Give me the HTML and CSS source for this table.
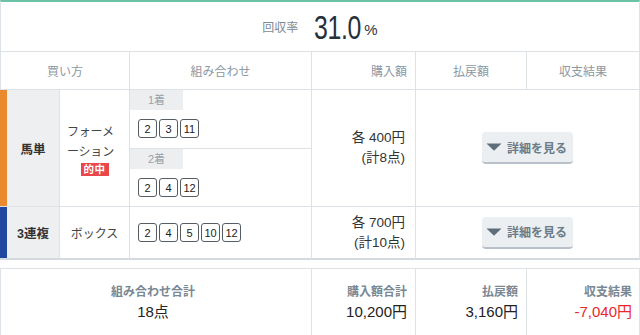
FILE: index.html
```html
<!DOCTYPE html>
<html lang="ja">
<head>
<meta charset="utf-8">
<title>収支</title>
<link rel="stylesheet" href="styles.css">
</head>
<body>
<div class="panel">
  <div class="rate">
    <span class="rate-label">回収率</span>
    <span class="rate-value"><span class="rate-digits">31.0</span></span>
    <span class="rate-unit">%</span>
  </div>

  <div class="bets">
    <div class="th th-first">買い方</div>
    <div class="th">組み合わせ</div>
    <div class="th th-right">購入額</div>
    <div class="th">払戻額</div>
    <div class="th">収支結果</div>

    <div class="cell bar bar-orange row1"></div>
    <div class="cell type row1">馬単</div>
    <div class="cell method method-left row1">
      <div class="method-text">フォーメーション</div>
      <span class="hit">的中</span>
    </div>
    <div class="cell combo row1">
      <div class="leg leg-top">
        <div class="leg-label">1着</div>
        <div class="nums"><span class="num">2</span><span class="num">3</span><span class="num">11</span></div>
      </div>
      <div class="leg leg-bottom">
        <div class="leg-label">2着</div>
        <div class="nums"><span class="num">2</span><span class="num">4</span><span class="num">12</span></div>
      </div>
    </div>
    <div class="cell amount row1">各 400円<br>(計8点)</div>
    <div class="cell detail row1">
      <button class="detail-btn" type="button"><svg class="tri" width="16" height="8" viewBox="0 0 16 8"><path d="M0.5 0.5 H15.5 L8 7.8 Z" fill="#5e6e7b"/></svg>詳細を見る</button>
    </div>

    <div class="cell bar bar-blue row2"></div>
    <div class="cell type row2">3連複</div>
    <div class="cell method row2">ボックス</div>
    <div class="cell combo combo-box row2">
      <div class="nums"><span class="num">2</span><span class="num">4</span><span class="num">5</span><span class="num">10</span><span class="num">12</span></div>
    </div>
    <div class="cell amount row2">各 700円<br>(計10点)</div>
    <div class="cell detail row2">
      <button class="detail-btn" type="button"><svg class="tri" width="16" height="8" viewBox="0 0 16 8"><path d="M0.5 0.5 H15.5 L8 7.8 Z" fill="#5e6e7b"/></svg>詳細を見る</button>
    </div>
  </div>

  <div class="summary">
    <div class="sum sum-first sum-center">
      <div class="sum-label">組み合わせ合計</div>
      <div class="sum-value">18点</div>
    </div>
    <div class="sum">
      <div class="sum-label">購入額合計</div>
      <div class="sum-value">10,200円</div>
    </div>
    <div class="sum">
      <div class="sum-label">払戻額</div>
      <div class="sum-value">3,160円</div>
    </div>
    <div class="sum sum-last">
      <div class="sum-label">収支結果</div>
      <div class="sum-value minus">-7,040円</div>
    </div>
  </div>
</div>
</body>
</html>
```

FILE: styles.css
```css
* {
  box-sizing: border-box;
  margin: 0;
  padding: 0;
}

body {
  margin: 0;
  width: 640px;
  background: #ffffff;
  font-family: "Liberation Sans", "Noto Sans CJK JP", sans-serif;
  color: #333333;
}

.panel {
  width: 640px;
}

/* recovery rate header */
.rate {
  display: flex;
  justify-content: center;
  align-items: center;
  height: 52px;
  border-top: 2px solid #6cc2a6;
  border-left: 1px solid #dde2e6;
  border-right: 1px solid #dde2e6;
  border-bottom: 1px solid #dde2e6;
}

.rate-label {
  font-size: 12px;
  color: #7e8a94;
  margin-right: 16px;
}

.rate-value {
  display: inline-block;
  width: 45px;
  height: 34px;
  overflow: visible;
  white-space: nowrap;
}

.rate-digits {
  display: inline-block;
  font-family: "Liberation Sans", sans-serif;
  font-size: 34px;
  line-height: 34px;
  color: #26303a;
  letter-spacing: -0.5px;
  transform: scaleX(0.73);
  transform-origin: left center;
}

.rate-unit {
  font-size: 15px;
  color: #333;
  margin-left: 5px;
  margin-top: 5px;
}

/* bets grid */
.bets {
  display: grid;
  grid-template-columns: 7px 53px 70px 182px 104px 111px 113px;
}

.th {
  height: 38px;
  display: flex;
  align-items: center;
  justify-content: center;
  font-size: 12px;
  color: #8c98a2;
  border-right: 1px solid #dde2e6;
  border-bottom: 1px solid #dde2e6;
}

.th-first {
  grid-column: span 3;
  border-left: 1px solid #dde2e6;
}

.th-right {
  justify-content: flex-end;
  padding-right: 8px;
}

.cell {
  border-right: 1px solid #dde2e6;
  border-bottom: 1px solid #dde2e6;
}

.row1 {
  height: 117px;
}

.row2 {
  height: 53px;
  border-bottom: 2px solid #d3d9de;
}

.bar {
  border-right: none;
}

.bar-orange {
  background: #e98a2f;
}

.bar-blue {
  background: #1f46a0;
}

.type {
  background: #edeff1;
  display: flex;
  align-items: center;
  justify-content: center;
  font-size: 12.5px;
  font-weight: bold;
  color: #333;
}

.method {
  display: flex;
  flex-direction: column;
  align-items: center;
  justify-content: center;
  font-size: 12px;
  color: #444;
}

.method-left {
  align-items: stretch;
  padding: 2px 10px 0 7px;
}

.method-text {
  line-height: 20px;
  line-break: anywhere;
  letter-spacing: -0.2px;
}

.hit {
  align-self: center;
  margin-top: 1px;
  margin-left: 3px;
  display: inline-block;
  background: #e9474a;
  color: #fff;
  font-size: 10.5px;
  font-weight: bold;
  line-height: 13px;
  padding: 0 3px;
  letter-spacing: 0.5px;
}

.combo {
  display: flex;
  flex-direction: column;
}

.leg-top {
  height: 59px;
  border-bottom: 1px solid #dde2e6;
}

.leg-bottom {
  height: 57px;
}

.leg-label {
  width: 53px;
  height: 20px;
  background: #eceef0;
  color: #98a3ac;
  font-size: 11px;
  line-height: 20px;
  text-align: center;
}

.nums {
  display: flex;
  gap: 2px;
  padding: 9px 0 0 8px;
}

.combo-box {
  justify-content: center;
}

.combo-box .nums {
  padding: 0 0 0 8px;
}

.num {
  width: 19px;
  height: 19px;
  border: 1px solid #555c62;
  border-radius: 3px;
  display: flex;
  align-items: center;
  justify-content: center;
  font-size: 11px;
  color: #222;
}

.amount {
  display: flex;
  flex-direction: column;
  justify-content: center;
  text-align: right;
  padding-right: 10px;
  font-size: 13.5px;
  line-height: 20px;
  color: #333;
}

.detail {
  grid-column: span 2;
  display: flex;
  align-items: center;
  justify-content: center;
}

.detail-btn {
  display: inline-flex;
  align-items: center;
  gap: 5px;
  height: 32px;
  padding: 0 6px 0 4px;
  background: #eceff1;
  border: none;
  border-bottom: 2px solid #b8c1c9;
  border-radius: 4px;
  font-family: "Liberation Sans", "Noto Sans CJK JP", sans-serif;
  font-size: 12px;
  font-weight: bold;
  color: #6b7b88;
}

.tri {
  display: block;
}

/* summary */
.summary {
  display: grid;
  grid-template-columns: 312px 104px 111px 113px;
  margin-top: 8px;
  border-top: 1px solid #dde2e6;
}

.sum {
  height: 70px;
  padding: 14px 8px 0 0;
  text-align: right;
  border-right: 1px solid #dde2e6;
}

.sum-first {
  border-left: 1px solid #dde2e6;
}

.sum-center {
  text-align: center;
  padding-right: 6px;
}

.sum-last {
  padding-right: 7px;
}

.sum-label {
  font-size: 12px;
  line-height: 18px;
  font-weight: bold;
  color: #7a8893;
}

.sum-value {
  font-size: 15px;
  line-height: 22px;
  color: #222;
}

.minus {
  color: #e8282b;
}
```
